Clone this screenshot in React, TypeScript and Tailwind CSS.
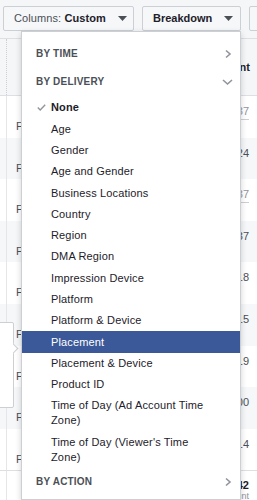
import React from "react";

const deliveryItems = [
  "Age",
  "Gender",
  "Age and Gender",
  "Business Locations",
  "Country",
  "Region",
  "DMA Region",
  "Impression Device",
  "Platform",
  "Platform & Device",
  "Placement",
  "Placement & Device",
  "Product ID",
  "Time of Day (Ad Account Time Zone)",
  "Time of Day (Viewer's Time Zone)",
];

const rows = [
  { value: "$1.37", dash: true },
  { value: "$0.24", dash: false },
  { value: "$1.37", dash: true },
  { value: "$2.37", dash: false },
  { value: "$0.18", dash: false },
  { value: "$0.15", dash: false },
  { value: "$0.19", dash: false },
  { value: "$1.00", dash: false },
  { value: "$0.14", dash: false },
];

function Caret() {
  return (
    <svg width="9" height="5" viewBox="0 0 9 5" className="ml-3 shrink-0">
      <path d="M0 0h9L4.5 5z" fill="#4b4f56" />
    </svg>
  );
}

function ChevronRight() {
  return (
    <svg width="10" height="10" viewBox="0 0 10 10" className="shrink-0">
      <path
        d="M3 1.5L7 5L3 8.5"
        fill="none"
        stroke="#90949c"
        strokeWidth="1.6"
      />
    </svg>
  );
}

function ChevronDown() {
  return (
    <svg width="11" height="10" viewBox="0 0 11 10" className="shrink-0">
      <path
        d="M1 3L5.5 7L10 3"
        fill="none"
        stroke="#90949c"
        strokeWidth="1.6"
      />
    </svg>
  );
}

function SectionHeader({ label, open }: { label: string; open?: boolean }) {
  return (
    <div className="flex h-[28px] items-center justify-between pl-[14px] pr-[7px]">
      <span className="text-[10px] font-bold leading-none tracking-[0.2px] text-[#4b4f56]">
        {label}
      </span>
      {open ? <ChevronDown /> : <ChevronRight />}
    </div>
  );
}

export default function App() {
  return (
    <div className="relative h-[500px] w-[257px] overflow-hidden bg-white font-['Liberation_Sans',Arial,sans-serif]">
      {/* toolbar */}
      <div className="flex h-[38px] items-start gap-[8px] bg-[#f5f6f7] pl-[3px] pt-[6px]">
        <div className="flex h-[25px] w-[131px] shrink-0 items-center rounded-[2px] border border-[#ccd0d5] bg-[#f6f7f9] pl-[10px] text-[11px] tracking-[0.1px] text-[#4b4f56]">
          <span>Columns:&nbsp;</span>
          <span className="font-bold text-[#1d2129]">Custom</span>
          <Caret />
        </div>
        <div className="flex h-[25px] w-[99px] shrink-0 items-center rounded-[2px] border border-[#ccd0d5] bg-[#f6f7f9] pl-[10px] text-[11px] font-bold text-[#1d2129]">
          <span>Breakdown</span>
          <Caret />
        </div>
        <div className="h-[25px] w-[40px] shrink-0 rounded-[2px] border border-[#ccd0d5] bg-[#f6f7f9]" />
      </div>

      {/* table */}
      <div className="flex h-[58px] border-y border-[#dddfe2] bg-[#f5f6f7]">
        <div className="w-[7px] border-r border-dotted border-[#ccd0d5]" />
        <div className="flex-1" />
        <div className="mr-[7px] flex items-center text-[11px] font-bold text-[#1d2129]">
          Amount
        </div>
      </div>
      {rows.map((row, i) => (
        <div
          key={i}
          className={
            i % 2 === 1
              ? "flex h-[41.6px] bg-[#f6f7f9]"
              : "flex h-[41.6px] bg-white"
          }
        >
          <div className="w-[7px] border-r border-[#e5e6e9]" />
          <div className="flex-1 pl-[9px] pt-[24px] text-[11px] leading-[13px] text-[#4b4f56]">
            F
          </div>
          <div className="flex flex-col items-end pr-[8px] pt-[9px] text-[11px] leading-[13px]">
            <span className={row.dash ? "text-[#90949c]" : "text-[#4b4f56]"}>
              {row.value}
            </span>
            {row.dash && (
              <span className="mt-[1px] h-[1px] w-[9px] bg-[#ccd0d5]" />
            )}
          </div>
        </div>
      ))}
      <div className="flex h-[32px] border-t border-[#dddfe2] bg-white">
        <div className="w-[7px] border-r border-[#e5e6e9]" />
        <div className="flex-1" />
        <div className="flex flex-col items-end pr-[8px] pt-[8px] text-[11px] leading-[12px]">
          <span className="font-bold text-[#1d2129]">$13.42</span>
          <span className="text-[9px] leading-[10px] text-[#90949c]">
            Amount
          </span>
        </div>
      </div>

      {/* popover behind the menu */}
      <div className="absolute left-[-4px] top-[322px] h-[86px] w-[18px] rounded-[2px] border border-[#ccd0d5] bg-white">
        <div className="absolute right-[-4px] top-[22px] h-[7px] w-[7px] rotate-45 border-r border-t border-[#ccd0d5] bg-white" />
      </div>

      {/* breakdown menu */}
      <div className="absolute bottom-0 left-[21px] top-[31px] w-[220px] border border-[#ccd0d5] bg-white pt-[8px] shadow-[0_2px_6px_rgba(0,0,0,0.18)]">
        <SectionHeader label="BY TIME" />
        <SectionHeader label="BY DELIVERY" open />
        <div className="pt-[1.35px]">
          <div className="flex items-center py-[3.15px] pl-[15px] text-[11px] leading-[15px] tracking-[0.15px]">
            <svg width="9" height="7" viewBox="0 0 9 7" className="mr-[5px]">
              <path
                d="M0.8 3.6L3.2 6L8.2 0.8"
                fill="none"
                stroke="#90949c"
                strokeWidth="1.4"
              />
            </svg>
            <span className="font-bold text-[#1d2129]">None</span>
          </div>
          {deliveryItems.map((item) => (
            <div
              key={item}
              className={
                item === "Placement"
                  ? "bg-[#3b5998] py-[3.15px] pl-[29px] pr-[30px] text-[11px] leading-[15px] tracking-[0.15px] text-white"
                  : "py-[3.15px] pl-[29px] pr-[30px] text-[11px] leading-[15px] tracking-[0.15px] text-[#1d2129]"
              }
            >
              {item}
            </div>
          ))}
        </div>
        <SectionHeader label="BY ACTION" />
      </div>
    </div>
  );
}
